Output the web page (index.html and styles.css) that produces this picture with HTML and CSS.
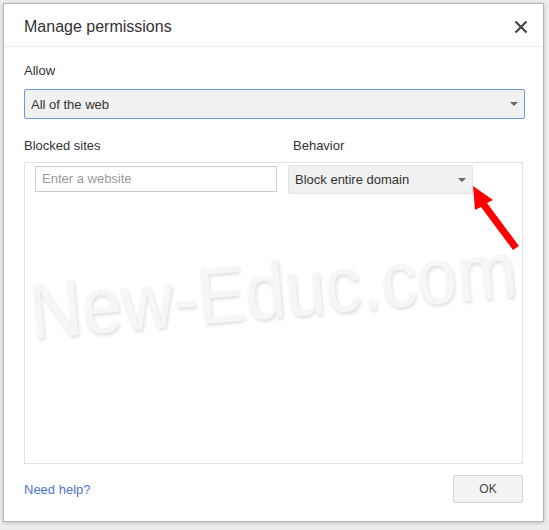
FILE: index.html
```html
<!DOCTYPE html>
<html lang="en">
<head>
  <meta charset="UTF-8">
  <title>Manage permissions</title>
  <link rel="stylesheet" href="styles.css">
</head>
<body>

<div class="dialog">
  <div class="header">
    <h1>Manage permissions</h1>
    <svg class="close" width="14" height="14" viewBox="0 0 14 14">
      <path d="M1.5 1.5 L12.5 12.5 M12.5 1.5 L1.5 12.5" stroke="#444" stroke-width="2.2"/>
    </svg>
  </div>

  <div class="content">
    <p class="label">Allow</p>
    <div class="select select-wide">
      <span>All of the web</span>
      <span class="caret"></span>
    </div>

    <div class="cols">
      <p class="label col-sites">Blocked sites</p>
      <p class="label">Behavior</p>
    </div>

    <div class="list">
      <div class="row">
        <div class="input">Enter a website</div>
        <div class="select select-small">
          <span>Block entire domain</span>
          <span class="caret"></span>
        </div>
      </div>
    </div>
  </div>

  <div class="footer">
    <a href="#" class="help">Need help?</a>
    <button>OK</button>
  </div>

  <div class="watermark">New-Educ.com</div>

  <svg class="arrow" width="60" height="70" viewBox="0 0 60 70">
    <polygon points="2,2 22,16 16,19 48,62 42,66 10,23 4,26" fill="#f00"/>
  </svg>
</div>

</body>
</html>
```

FILE: styles.css
```css
body { margin: 0; padding: 3px; background: #ececec; font-family: "Liberation Sans", Arial, sans-serif; color: #333; }
.dialog { position: relative; width: 539px; height: 517px; background: white; border: 1px solid #b5b5b5; box-shadow: 0 1px 4px rgba(0,0,0,0.2); display: flex; flex-direction: column; overflow: hidden; }
.header { height: 39px; padding: 3px 15px 0 20px; border-bottom: 1px solid #ebebeb; display: flex; align-items: center; justify-content: space-between; }
h1 { margin: 0; font-size: 16px; font-weight: normal; color: #333; }
.close { display: block; }
.content { padding: 16px 18px 0 20px; }
.label { margin: 0; font-size: 13px; color: #333; }
.select { display: flex; align-items: center; justify-content: space-between; background: #f1f1f1; font-size: 13px; color: #333; box-sizing: border-box; }
.select-wide { margin-top: 11px; height: 30px; border: 1px solid #6d9ae8; border-radius: 2px; padding: 0 6px 0 6px; }
.caret { width: 0; height: 0; border-left: 4px solid transparent; border-right: 4px solid transparent; border-top: 4px solid #666; }
.cols { display: flex; margin-top: 19px; }
.col-sites { width: 269px; }
.list { margin-top: 9px; width: 499px; height: 302px; box-sizing: border-box; border: 1px solid #e3e3e3; padding: 2px 0 0 10px; }
.row { display: flex; align-items: flex-start; gap: 11px; }
.input { margin-top: 1px; width: 242px; height: 26px; box-sizing: border-box; border: 1px solid #ccc; padding: 0 6px; line-height: 24px; font-size: 13px; color: #999; }
.select-small { width: 185px; height: 29px; border: 1px solid #e4e4e4; padding: 0 6px 0 6px; }
.footer { display: flex; justify-content: space-between; align-items: center; padding: 11px 20px 0 20px; }
.help { font-size: 13px; color: #4f73d6; text-decoration: none; }
button { width: 70px; height: 28px; background: #f3f3f3; border: 1px solid #d4d4d4; border-radius: 2px; font-family: inherit; font-size: 12px; color: #444; }
.watermark { position: absolute; left: 30px; top: 262px; font-size: 80px; color: #f6f6f6; text-shadow: 1px 2px 4px rgba(0,0,0,0.14); transform: rotate(-5deg) scaleX(0.9); transform-origin: left bottom; pointer-events: none; white-space: nowrap; }
.arrow { position: absolute; left: 467px; top: 180px; }
```
